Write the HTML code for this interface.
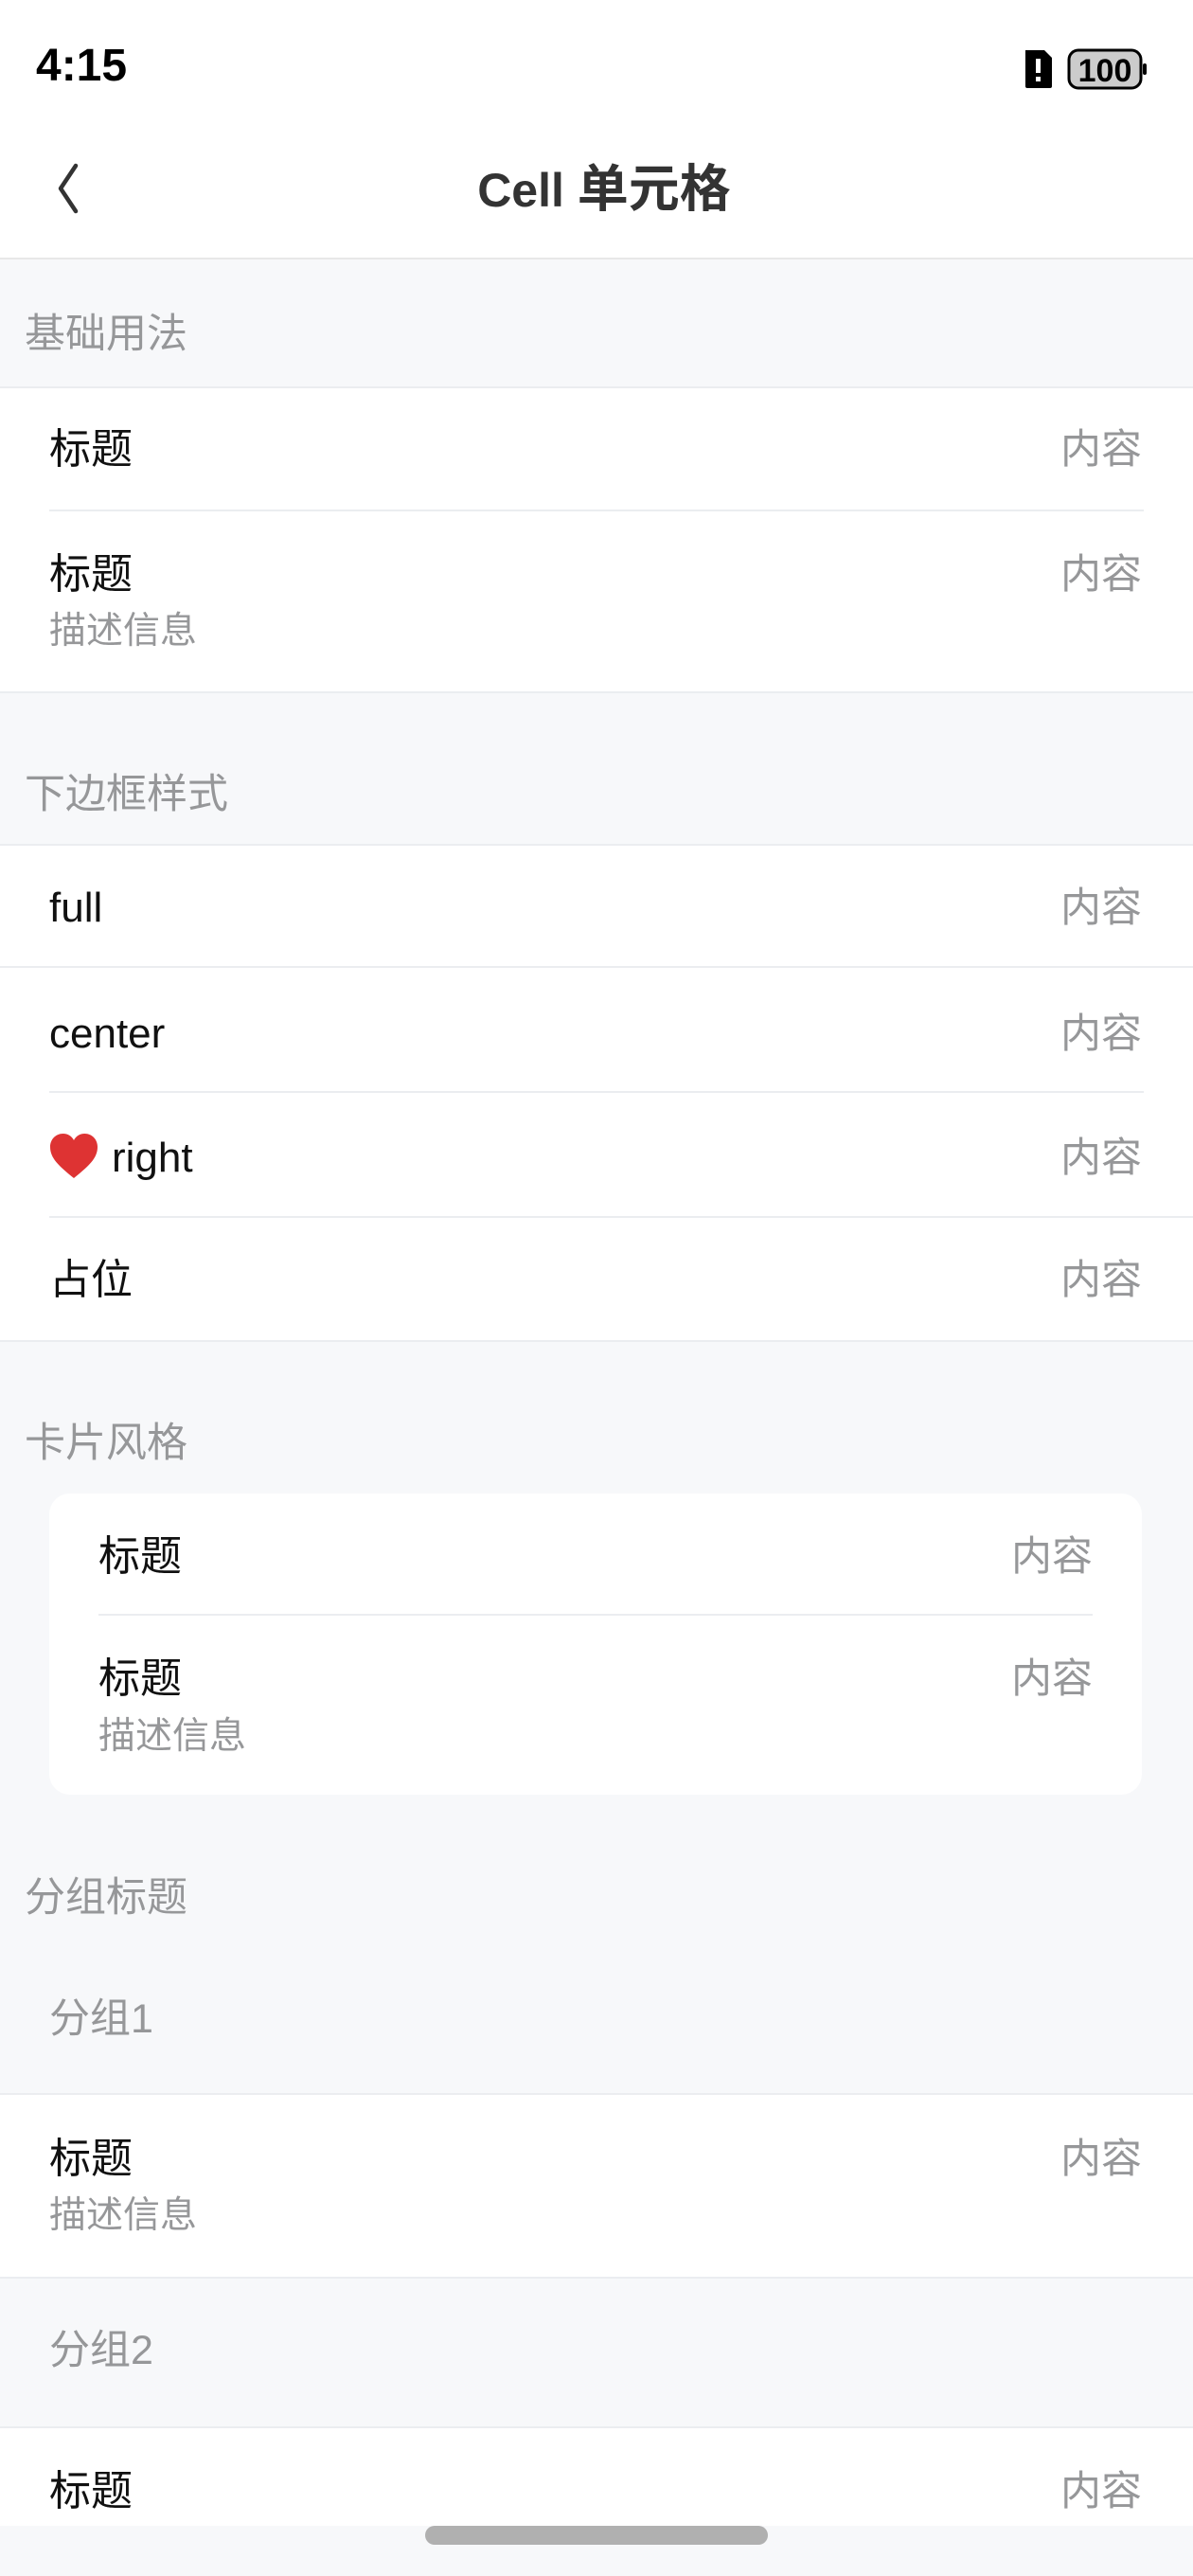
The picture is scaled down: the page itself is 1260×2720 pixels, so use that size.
<!DOCTYPE html>
<html><head><meta charset="utf-8">
<style>
*{margin:0;padding:0;box-sizing:border-box}
body{width:1260px;height:2720px;background:#f7f8fa;position:relative;overflow:hidden;font-family:"Liberation Sans","Noto Sans CJK SC",sans-serif}
.a{position:absolute}
.w{position:absolute;left:0;width:1260px;background:#fff}
.bt{border-top:2px solid #ebedf0}
.bb{border-bottom:2px solid #ebedf0}
.t{position:absolute;font-size:44px;line-height:60px;color:#111;white-space:nowrap}
.v{position:absolute;font-size:43px;line-height:60px;color:#969799;white-space:nowrap;text-align:right}
.d{position:absolute;font-size:39px;line-height:50px;color:#969799;white-space:nowrap}
.s{position:absolute;font-size:43px;line-height:60px;color:#969799;white-space:nowrap}
.ln{position:absolute;height:2px;background:#ebedf0}
</style></head><body>
<div class="w" style="top:0;height:274px;border-bottom:2px solid #e8e8e8"></div>
<div class="a" style="left:38px;top:41px;font-size:48px;line-height:58px;font-weight:bold;color:#000">4:15</div>
<svg class="a" style="left:1080px;top:50px" width="134" height="46" viewBox="0 0 134 46">
<path d="M3 3h20l8 8v30a2 2 0 0 1-2 2H5a2 2 0 0 1-2-2z" fill="#000"/>
<rect x="14" y="12" width="5" height="15" fill="#fff"/><rect x="14" y="31" width="5" height="5" fill="#fff"/>
<rect x="49" y="3" width="76" height="40" rx="10" fill="#ccc" stroke="#000" stroke-width="3"/>
<rect x="127" y="17" width="4" height="12" rx="2" fill="#000"/>
<text x="87" y="36" font-family="Liberation Sans" font-size="34" font-weight="bold" text-anchor="middle" fill="#000">100</text>
</svg>
<svg class="a" style="left:58px;top:170px" width="30" height="58" viewBox="0 0 30 58"><path d="M22 5L6 29l16 24" fill="none" stroke="#333" stroke-width="4.5" stroke-linecap="round" stroke-linejoin="round"/></svg>
<div class="a" style="left:8px;width:1260px;top:170px;text-align:center;font-size:50px;line-height:60px;font-weight:bold;color:#333">Cell <span style="font-size:54px">单元格</span></div>

<div class="s" style="left:26px;top:323px">基础用法</div>
<div class="w bt bb" style="top:408px;height:324px"></div>
<div class="t" style="left:52px;top:445px">标题</div><div class="v" style="right:54px;top:445px">内容</div>
<div class="ln" style="left:52px;width:1156px;top:538px"></div>
<div class="t" style="left:52px;top:577px">标题</div><div class="v" style="right:54px;top:577px">内容</div>
<div class="d" style="left:52px;top:642px">描述信息</div>

<div class="s" style="left:26px;top:809px">下边框样式</div>
<div class="w bt bb" style="top:891px;height:526px"></div>
<div class="t" style="left:52px;top:929px">full</div><div class="v" style="right:54px;top:929px">内容</div>
<div class="ln" style="left:0;width:1260px;top:1020px"></div>
<div class="t" style="left:52px;top:1062px">center</div><div class="v" style="right:54px;top:1062px">内容</div>
<div class="ln" style="left:52px;width:1156px;top:1152px"></div>
<svg class="a" style="left:52px;top:1196px" width="52" height="50" viewBox="0 0 52 50"><path d="M26 48C10 35 1 27 1 15 1 7 7 1 14.5 1 20 1 24 4 26 8 28 4 32 1 37.5 1 45 1 51 7 51 15 51 27 42 35 26 48z" fill="#de3333"/></svg>
<div class="t" style="left:118px;top:1193px">right</div><div class="v" style="right:54px;top:1193px">内容</div>
<div class="ln" style="left:52px;width:1208px;top:1284px"></div>
<div class="t" style="left:52px;top:1322px">占位</div><div class="v" style="right:54px;top:1322px">内容</div>

<div class="s" style="left:26px;top:1494px">卡片风格</div>
<div class="a" style="left:52px;top:1577px;width:1154px;height:318px;background:#fff;border-radius:22px"></div>
<div class="t" style="left:104px;top:1614px">标题</div><div class="v" style="right:106px;top:1614px">内容</div>
<div class="ln" style="left:104px;width:1050px;top:1704px"></div>
<div class="t" style="left:104px;top:1743px">标题</div><div class="v" style="right:106px;top:1743px">内容</div>
<div class="d" style="left:104px;top:1809px">描述信息</div>

<div class="s" style="left:26px;top:1974px">分组标题</div>
<div class="s" style="left:52px;top:2102px">分组1</div>
<div class="w bt bb" style="top:2210px;height:196px"></div>
<div class="t" style="left:52px;top:2250px">标题</div><div class="v" style="right:54px;top:2250px">内容</div>
<div class="d" style="left:52px;top:2315px">描述信息</div>
<div class="s" style="left:52px;top:2452px">分组2</div>
<div class="w bt" style="top:2562px;height:105px"></div>
<div class="t" style="left:52px;top:2601px">标题</div><div class="v" style="right:54px;top:2601px">内容</div>
<div class="a" style="left:449px;top:2667px;width:362px;height:20px;border-radius:10px;background:#b0b0b0"></div>
</body></html>
